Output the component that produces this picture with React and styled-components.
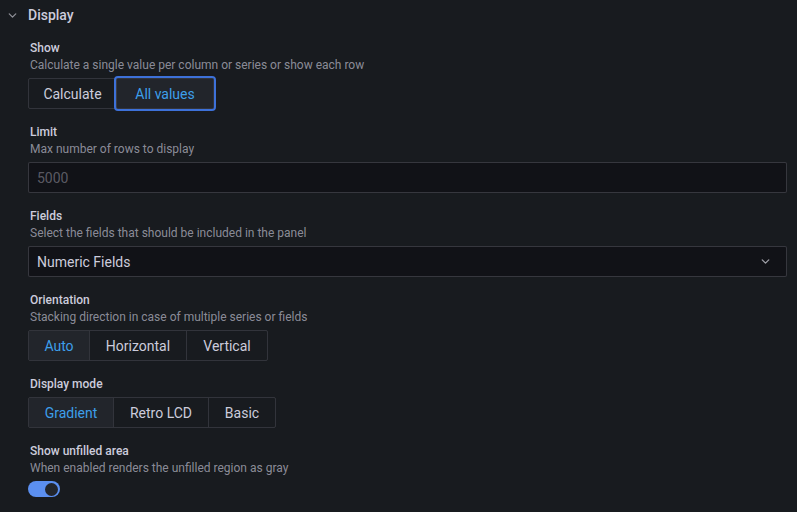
import React, { useState } from 'react';
import styled, { createGlobalStyle } from 'styled-components';

const Global = createGlobalStyle`
  html, body { margin: 0; padding: 0; background: #181b1f; }
  body { font-family: Roboto, "Liberation Sans", sans-serif; color: #ccccdc; }
  * { box-sizing: border-box; }
`;

const Page = styled.div`
  width: 797px;
  height: 512px;
  background: #181b1f;
  overflow: hidden;
`;

const Header = styled.div`
  display: flex;
  align-items: center;
  height: 30px;
  padding-left: 6px;
  gap: 9px;
  font-size: 14px;
  font-weight: 500;
  color: #ccccdc;
`;

const Body = styled.div`
  padding: 10px 10px 0 28px;
  display: flex;
  flex-direction: column;
`;

const Field = styled.div`
  display: flex;
  flex-direction: column;
  margin-bottom: 15px;
`;

const Head = styled.div`
  display: flex;
  flex-direction: column;
  margin-bottom: 4px;
  padding-left: 2px;
`;

const Label = styled.div`
  font-size: 12px;
  font-weight: 500;
  line-height: 17px;
  color: #ccccdc;
`;

const Desc = styled.div`
  font-size: 12px;
  line-height: 17px;
  color: rgba(204, 204, 220, 0.65);
`;

const Group = styled.div`
  display: inline-flex;
  align-self: flex-start;
  border: 1px solid rgba(204, 204, 220, 0.15);
  border-radius: 2px;
  height: 31px;
`;

const Option = styled.div`
  display: flex;
  align-items: center;
  justify-content: center;
  flex-shrink: 0;
  white-space: nowrap;
  width: ${p => p.$w}px;
  font-size: 14px;
  color: ${p => (p.$active ? '#3d9fea' : '#ccccdc')};
  background: ${p => (p.$active ? '#22252b' : 'transparent')};
  border-left: ${p => (p.$first ? 'none' : '1px solid rgba(204, 204, 220, 0.15)')};
  position: relative;
  ${p => p.$focus && `
    &::after {
      content: '';
      position: absolute;
      inset: -3px;
      border: 2px solid #3d71d9;
      border-radius: 4px;
    }
  `}
`;

const Input = styled.div`
  height: 31px;
  width: 759px;
  background: #111217;
  border: 1px solid rgba(204, 204, 220, 0.2);
  border-radius: 2px;
  display: flex;
  align-items: center;
  justify-content: space-between;
  padding: 0 14px 0 8px;
  font-size: 14px;
  color: ${p => (p.$placeholder ? 'rgba(204, 204, 220, 0.4)' : '#ccccdc')};
`;

const Toggle = styled.div`
  width: 32px;
  height: 16px;
  border-radius: 8px;
  background: #5b8ff0;
  position: relative;
  &::after {
    content: '';
    position: absolute;
    right: 2px;
    top: 1.5px;
    width: 13px;
    height: 13px;
    border-radius: 50%;
    background: #22252b;
  }
`;

const Chevron = ({ size = 12, color = '#9fa0a8' }) => (
  <svg width={size} height={size} viewBox="0 0 24 24" fill="none">
    <path d="M6 9l6 6 6-6" stroke={color} strokeWidth="2.4" strokeLinecap="round" strokeLinejoin="round" />
  </svg>
);

export default function App() {
  const [show] = useState('all');
  return (
    <Page>
      <Global />
      <Header>
        <Chevron size={13} color="#8e8f97" />
        <span>Display</span>
      </Header>
      <Body>
        <Field>
          <Head>
            <Label>Show</Label>
            <Desc>Calculate a single value per column or series or show each row</Desc>
          </Head>
          <Group>
            <Option $first $w={87} $active={show === 'calc'}>Calculate</Option>
            <Option $w={97} $active={show === 'all'} $focus>All values</Option>
          </Group>
        </Field>
        <Field>
          <Head>
            <Label>Limit</Label>
            <Desc>Max number of rows to display</Desc>
          </Head>
          <Input $placeholder>5000</Input>
        </Field>
        <Field>
          <Head>
            <Label>Fields</Label>
            <Desc>Select the fields that should be included in the panel</Desc>
          </Head>
          <Input>
            <span>Numeric Fields</span>
            <Chevron size={13} color="#9fa0a8" />
          </Input>
        </Field>
        <Field>
          <Head>
            <Label>Orientation</Label>
            <Desc>Stacking direction in case of multiple series or fields</Desc>
          </Head>
          <Group>
            <Option $first $w={60} $active>Auto</Option>
            <Option $w={97}>Horizontal</Option>
            <Option $w={81}>Vertical</Option>
          </Group>
        </Field>
        <Field>
          <Head>
            <Label>Display mode</Label>
          </Head>
          <Group>
            <Option $first $w={84} $active>Gradient</Option>
            <Option $w={95}>Retro LCD</Option>
            <Option $w={67}>Basic</Option>
          </Group>
        </Field>
        <Field>
          <Head>
            <Label>Show unfilled area</Label>
            <Desc>When enabled renders the unfilled region as gray</Desc>
          </Head>
          <Toggle />
        </Field>
      </Body>
    </Page>
  );
}
